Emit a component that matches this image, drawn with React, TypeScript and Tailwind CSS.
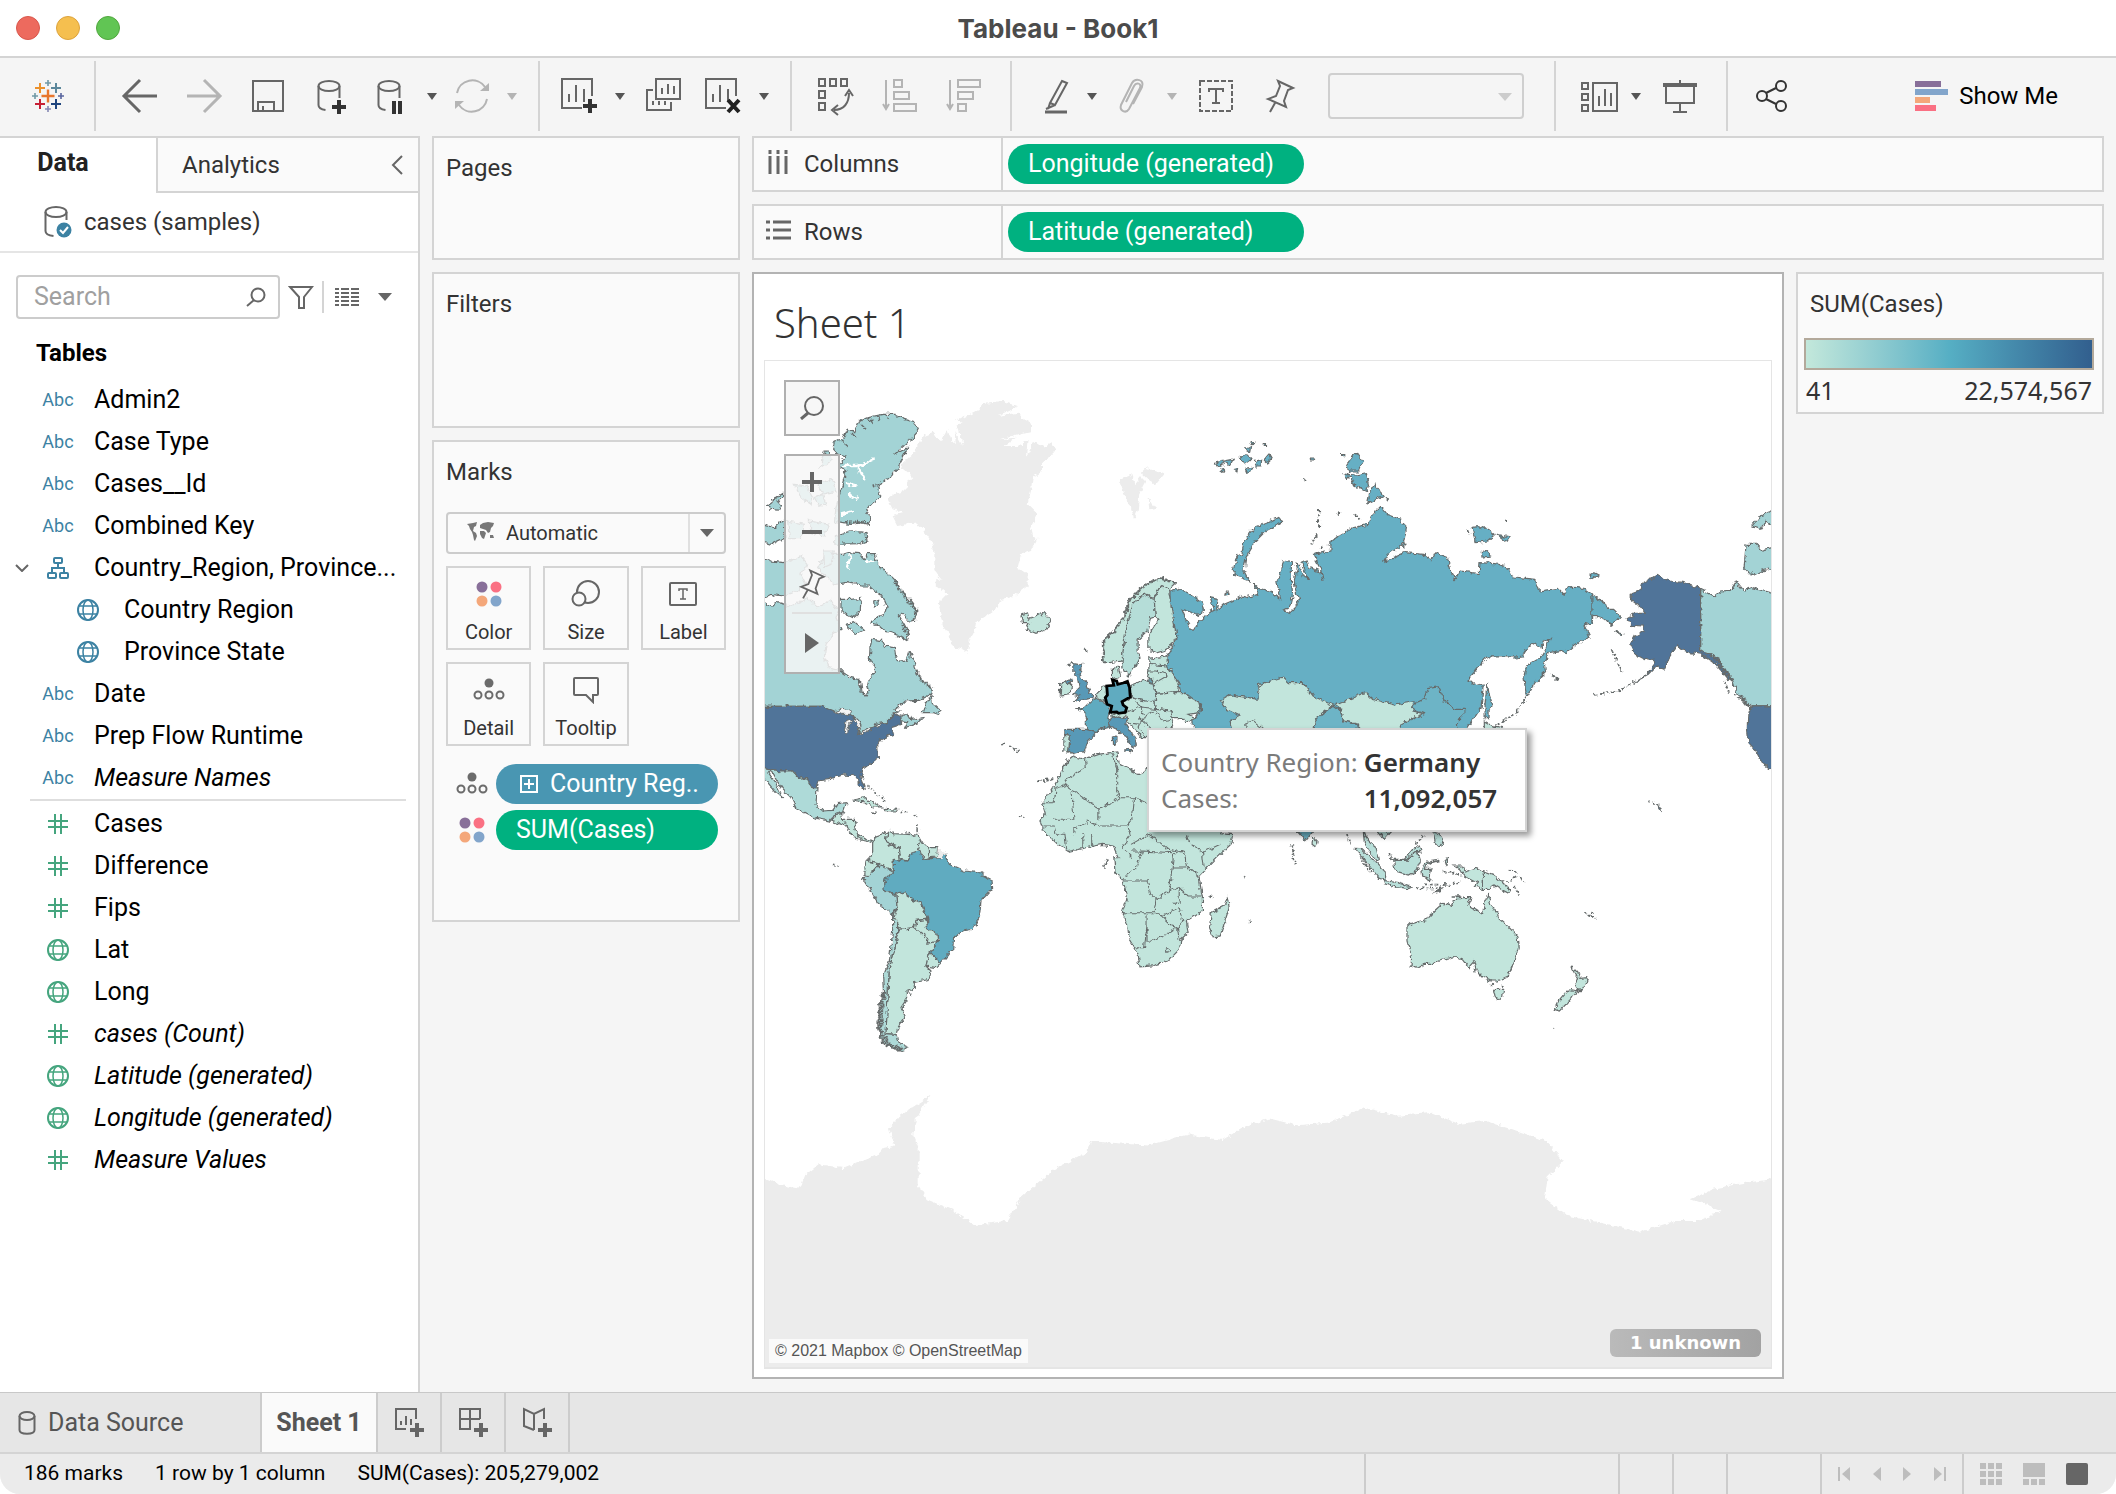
import { type ReactNode } from "react";
import { clsx } from "clsx";

// ─── Data ────────────────────────────────────────────────────────────────────

type FieldKind = "abc" | "hash" | "globe" | "tree";

interface Field {
  name: string;
  kind: FieldKind;
  italic?: boolean;
  child?: boolean;
}

const DIMENSIONS: Field[] = [
  { name: "Admin2", kind: "abc" },
  { name: "Case Type", kind: "abc" },
  { name: "Cases__Id", kind: "abc" },
  { name: "Combined Key", kind: "abc" },
  { name: "Country_Region, Province...", kind: "tree" },
  { name: "Country Region", kind: "globe", child: true },
  { name: "Province State", kind: "globe", child: true },
  { name: "Date", kind: "abc" },
  { name: "Prep Flow Runtime", kind: "abc" },
  { name: "Measure Names", kind: "abc", italic: true },
];

const MEASURES: Field[] = [
  { name: "Cases", kind: "hash" },
  { name: "Difference", kind: "hash" },
  { name: "Fips", kind: "hash" },
  { name: "Lat", kind: "globe" },
  { name: "Long", kind: "globe" },
  { name: "cases (Count)", kind: "hash", italic: true },
  { name: "Latitude (generated)", kind: "globe", italic: true },
  { name: "Longitude (generated)", kind: "globe", italic: true },
  { name: "Measure Values", kind: "hash", italic: true },
];

// ─── Icons ───────────────────────────────────────────────────────────────────

function Icon({
  size = 40,
  className,
  children,
}: {
  size?: number;
  className?: string;
  children: ReactNode;
}) {
  return (
    <svg
      width={size}
      height={size}
      viewBox={`0 0 ${size} ${size}`}
      fill="none"
      stroke="currentColor"
      strokeWidth="2"
      className={clsx("shrink-0", className)}
      aria-hidden="true"
    >
      {children}
    </svg>
  );
}

function Caret({ className }: { className?: string }) {
  return (
    <svg
      width="14"
      height="8"
      viewBox="0 0 14 8"
      className={clsx("shrink-0", className)}
      aria-hidden="true"
    >
      <path d="M0 0h14L7 8z" fill="currentColor" />
    </svg>
  );
}

function SmallCaret({ className }: { className?: string }) {
  return (
    <svg
      width="10"
      height="7"
      viewBox="0 0 10 7"
      className={clsx("shrink-0", className)}
      aria-hidden="true"
    >
      <path d="M0 0h10L5 7z" fill="currentColor" />
    </svg>
  );
}

function LogoIcon() {
  return (
    <Icon>
      <path d="M20 13.5v13M13.5 20h13" stroke="#e8762d" strokeWidth="2.4" />
      <path d="M12 7v10M7 12h10" stroke="#eb912c" />
      <path d="M28 7v10M23 12h10" stroke="#5b879b" />
      <path d="M12 23v10M7 28h10" stroke="#c72035" />
      <path d="M28 23v10M23 28h10" stroke="#1f457e" />
      <path d="M20 4v6M17 7h6M7 17v6M4 20h6" stroke="#7099a6" strokeWidth="1.6" />
      <path d="M33 17v6M30 20h6" stroke="#59659e" strokeWidth="1.6" />
      <path d="M20 30v6M17 33h6" stroke="#8689b5" strokeWidth="1.6" />
    </Icon>
  );
}

function DatabaseIcon({ children }: { children: ReactNode }) {
  return (
    <Icon>
      <ellipse cx="17" cy="10" rx="10.5" ry="5" />
      <path d="M6.5 10v19c0 3 3 4.500 7 5M27.500 10v12" />
      {children}
    </Icon>
  );
}

function SheetIcon({ children }: { children: ReactNode }) {
  return (
    <Icon>
      <path d="M22 32H2V3h30v17M9 26v-8M16 26V9M24 26V13" />
      {children}
    </Icon>
  );
}

function PinIcon({ size = 40 }: { size?: number }) {
  return (
    <svg
      width={size}
      height={size}
      viewBox="0 0 40 40"
      fill="none"
      stroke="currentColor"
      strokeWidth="2"
      aria-hidden="true"
    >
      <path d="M18 5 33 12 28 14 24 25 26 31 8 23 16 20 20 10zM15 27 10 36" />
    </svg>
  );
}

function GlobeIcon() {
  return (
    <Icon size={24}>
      <circle cx="12" cy="12" r="10" />
      <ellipse cx="12" cy="12" rx="5" ry="10" strokeWidth="1.500" />
      <path d="M3 8h18M3 16h18" strokeWidth="1.500" />
    </Icon>
  );
}

function HashIcon() {
  return (
    <Icon size={24}>
      <path d="M9 2v20M15 2v20M2 9h20M2 15h20" />
    </Icon>
  );
}

function TreeIcon() {
  return (
    <Icon size={24}>
      <rect x="8" y="2" width="8" height="5" rx="1" />
      <rect x="2" y="17" width="8" height="5" rx="1" />
      <rect x="14" y="17" width="8" height="5" rx="1" />
      <path d="M12 7v5M6 17v-5h12v5" />
    </Icon>
  );
}

function ColorDots() {
  return (
    <svg width="26" height="26" viewBox="0 0 26 26" aria-hidden="true">
      <circle cx="6" cy="6" r="5.500" fill="#886f99" />
      <circle cx="20" cy="6" r="5.500" fill="#fa7083" />
      <circle cx="6" cy="20" r="5.500" fill="#f4a77a" />
      <circle cx="20" cy="20" r="5.500" fill="#82a5cb" />
    </svg>
  );
}

function DetailDots() {
  return (
    <svg
      width="32"
      height="24"
      viewBox="0 0 32 24"
      fill="none"
      stroke="#6b6b6b"
      strokeWidth="2"
      aria-hidden="true"
    >
      <circle cx="16" cy="5" r="4.500" fill="#6b6b6b" stroke="none" />
      <circle cx="5" cy="17" r="3.500" />
      <circle cx="16" cy="17" r="3.500" />
      <circle cx="27" cy="17" r="3.500" />
    </svg>
  );
}

// ─── Title bar and toolbar ───────────────────────────────────────────────────

function TitleBar() {
  return (
    <header className="relative flex h-[58px] shrink-0 items-center justify-center border-b-2 border-[#d4d4d4] bg-white">
      <div className="absolute left-4 flex gap-4">
        <button aria-label="Close" className="size-6 rounded-full border border-[#d9574c] bg-[#ed6a5e]" />
        <button aria-label="Minimize" className="size-6 rounded-full border border-[#dda33c] bg-[#f5bf4f]" />
        <button aria-label="Zoom" className="size-6 rounded-full border border-[#51a73e] bg-[#61c554]" />
      </div>
      <h1 className="font-[Inter,sans-serif] text-[26px] font-bold text-[#4b4b4b]">
        Tableau - Book1
      </h1>
    </header>
  );
}

const TOOL_WIDTHS = {
  sm: "w-10",
  md: "w-12",
  lg: "w-14",
  xl: "w-16",
};

function Tool({
  label,
  disabled,
  size = "xl",
  children,
}: {
  label: string;
  disabled?: boolean;
  size?: keyof typeof TOOL_WIDTHS;
  children: ReactNode;
}) {
  return (
    <button
      aria-label={label}
      disabled={disabled}
      className={clsx(
        "flex shrink-0 items-center justify-center",
        TOOL_WIDTHS[size],
        disabled ? "text-[#b4b4b4]" : "text-[#666666]"
      )}
    >
      {children}
    </button>
  );
}

function Menu({ label, disabled }: { label: string; disabled?: boolean }) {
  return (
    <button
      aria-label={label}
      disabled={disabled}
      className={clsx(
        "flex h-10 w-6 shrink-0 items-center justify-center",
        disabled ? "text-[#b4b4b4]" : "text-[#555555]"
      )}
    >
      <SmallCaret />
    </button>
  );
}

function ToolGroup({ className, children }: { className?: string; children: ReactNode }) {
  return (
    <div
      className={clsx(
        "flex h-[70px] shrink-0 items-center border-r-2 border-[#d4d4d4]",
        className
      )}
    >
      {children}
    </div>
  );
}

function Toolbar() {
  return (
    <div className="flex h-[78px] shrink-0 items-center bg-[#f5f5f5] pb-0.5">
      <ToolGroup className="w-24 pl-7">
        <Tool label="Start page" size="sm">
          <LogoIcon />
        </Tool>
      </ToolGroup>

      <ToolGroup className="pr-3.5 pl-3">
        <Tool label="Undo">
          <Icon>
            <path d="M37 20H4M20 4 4 20l16 16" strokeWidth="3" />
          </Icon>
        </Tool>
        <Tool label="Redo" disabled>
          <Icon>
            <path d="M3 20h33M20 4l16 16-16 16" strokeWidth="3" />
          </Icon>
        </Tool>
        <Tool label="Save">
          <Icon>
            <path d="M5 5h30v30H5zM10 35V26h16v9M15 30v5" />
          </Icon>
        </Tool>
        <Tool label="New data source">
          <DatabaseIcon>
            <path d="M27 24v14M20 31h14" stroke="#333333" strokeWidth="4" />
          </DatabaseIcon>
        </Tool>
        <Tool label="Pause auto updates" size="lg">
          <DatabaseIcon>
            <path d="M22 25v13M28 25v13" stroke="#333333" strokeWidth="4" />
          </DatabaseIcon>
        </Tool>
        <Menu label="Auto update options" />
        <Tool label="Run update" size="lg" disabled>
          <Icon>
            <path d="M5 17A15.500 15.500 0 0 1 33 11M35 23A15.500 15.500 0 0 1 7 29" />
            <path d="M28 15h9V7zM12 25H3v8z" fill="currentColor" stroke="none" />
          </Icon>
        </Tool>
        <Menu label="Run update options" disabled />
      </ToolGroup>

      <ToolGroup className="pr-3.5 pl-3">
        <Tool label="New worksheet" size="lg">
          <SheetIcon>
            <path d="M30 23v14M23 30h14" stroke="#333333" strokeWidth="4" />
          </SheetIcon>
        </Tool>
        <Menu label="New worksheet options" />
        <Tool label="Duplicate">
          <Icon>
            <path d="M12 3h24v20H12zM18 18v-6M24 18V8M30 18v-8M9 14H3v20h24v-8M9 29v-4M15 29v-4M21 29v-4" />
          </Icon>
        </Tool>
        <Tool label="Clear sheet" size="lg">
          <SheetIcon>
            <path d="m24 24 11 12M35 24 24 36" stroke="#222222" strokeWidth="4" />
          </SheetIcon>
        </Tool>
        <Menu label="Clear options" />
      </ToolGroup>

      <ToolGroup className="pr-3.5 pl-3">
        <Tool label="Swap rows and columns">
          <Icon>
            <path d="M3 3h6v7H3zM14 3h6v7h-6zM25 3h6v7h-6zM3 15h6v7H3zM3 27h6v7H3zM18 34c10 0 15-7 15-17M29 20l4-6 4 6M22 29l-6 5 6 5" />
          </Icon>
        </Tool>
        <Tool label="Sort ascending" disabled>
          <Icon>
            <path d="M6 4v28M3 28l3 5 3-5M14 4h8v7h-8zM14 16h15v7H14zM14 28h22v7H14z" />
          </Icon>
        </Tool>
        <Tool label="Sort descending" disabled>
          <Icon>
            <path d="M6 4v28M3 28l3 5 3-5M14 4h22v7H14zM14 16h15v7H14zM14 28h8v7h-8z" />
          </Icon>
        </Tool>
      </ToolGroup>

      <ToolGroup className="pr-[30px] pl-5">
        <Tool label="Highlight" size="md">
          <Icon>
            <path d="m26 5 5 2-12 22-5-2zM14 27l-2 6M10 33l9-4" />
            <path d="M9 36h22" strokeWidth="3" />
          </Icon>
        </Tool>
        <Menu label="Highlight options" />
        <Tool label="Group members" size="lg" disabled>
          <Icon>
            <path d="m14 26 8-16c2-4 8-3 6 2L17 33c-3 5-10 2-8-4l11-22c3-5 13-4 10 4L21 28" />
          </Icon>
        </Tool>
        <Menu label="Group options" disabled />
        <Tool label="Show mark labels">
          <Icon>
            <rect x="4" y="5" width="32" height="30" strokeDasharray="5 2" />
            <path d="M13 16v-3h14v3M20 13v14M16 27h8" />
          </Icon>
        </Tool>
        <Tool label="Fix axes">
          <PinIcon />
        </Tool>
        <div className="relative ml-4 text-[#cccccc]">
          <select
            aria-label="Fit"
            disabled
            className="h-[46px] w-[196px] appearance-none rounded border-2 border-[#cfcfcf] bg-[#f5f5f5]"
          />
          <Caret className="pointer-events-none absolute top-5 right-3" />
        </div>
      </ToolGroup>

      <ToolGroup className="pr-3.5 pl-5">
        <Tool label="Show or hide cards" size="md">
          <Icon>
            <path d="M2 7h6v6H2zM2 18h6v6H2zM2 29h6v6H2zM13 7h24v28H13zM19 30V20M25 30V13M31 30V17" />
          </Icon>
        </Tool>
        <Menu label="Card options" />
        <Tool label="Presentation mode">
          <Icon>
            <path d="M20 4v4M20 28v8M13 36h14M6 10v17h28V10" />
            <path d="M3 9h34" strokeWidth="4" />
          </Icon>
        </Tool>
      </ToolGroup>

      <div className="flex flex-1 items-center justify-between pr-[58px] pl-6">
        <Tool label="Share" size="sm">
          <Icon className="text-[#333333]">
            <circle cx="10" cy="20" r="5" />
            <circle cx="29" cy="10" r="5" />
            <circle cx="29" cy="30" r="5" />
            <path d="m14 17 10-5M14 23l10 5" />
          </Icon>
        </Tool>
        <button className="flex items-center gap-2.5 text-2xl text-black">
          <svg width="34" height="30" viewBox="0 0 34 30" aria-hidden="true">
            <path fill="#886f99" d="M0 0h26v6H0z" />
            <path fill="#82a5cb" d="M0 8h33v6H0z" />
            <path fill="#f4a77a" d="M0 16h15v6H0z" />
            <path fill="#fa7083" d="M0 24h21v6H0z" />
          </svg>
          Show Me
        </button>
      </div>
    </div>
  );
}

// ─── Data pane ───────────────────────────────────────────────────────────────

function FieldRow({ field, measure }: { field: Field; measure?: boolean }) {
  return (
    <li className={clsx("flex h-[42px] items-center", field.child ? "pl-[30px]" : "pl-0")}>
      <span className="flex w-10 shrink-0 justify-center pl-1 text-[#666666]">
        {field.kind === "tree" && (
          <svg width="14" height="8" viewBox="0 0 14 8" fill="none" aria-hidden="true">
            <path d="m1 1 6 6 6-6" stroke="currentColor" strokeWidth="2" />
          </svg>
        )}
      </span>
      <span
        className={clsx(
          "flex w-9 shrink-0 justify-center text-lg",
          measure ? "text-[#45a57e]" : "text-[#3c82a3]"
        )}
      >
        {field.kind === "abc" && "Abc"}
        {field.kind === "tree" && <TreeIcon />}
        {field.kind === "globe" && <GlobeIcon />}
        {field.kind === "hash" && <HashIcon />}
      </span>
      <span
        className={clsx(
          "ml-[18px] text-[25px] whitespace-nowrap text-black",
          field.italic && "italic"
        )}
      >
        {field.name}
      </span>
    </li>
  );
}

function DataPane() {
  return (
    <aside className="w-[420px] shrink-0 border-t-2 border-r-2 border-[#d4d4d4] bg-white">
      <div className="flex h-[55px]" role="tablist">
        <button
          role="tab"
          aria-selected="true"
          className="w-[156px] pr-[30px] pb-1.5 text-[25px] font-bold text-[#222222]"
        >
          Data
        </button>
        <div className="flex flex-1 items-center justify-between border-b-2 border-l-2 border-[#d4d4d4] bg-[#fafafa] pr-3.5 pl-6">
          <button role="tab" aria-selected="false" className="text-2xl text-[#333333]">
            Analytics
          </button>
          <button aria-label="Collapse pane" className="text-[#666666]">
            <svg width="14" height="20" viewBox="0 0 14 20" fill="none">
              <path d="M12 1 3 10l9 9" stroke="currentColor" strokeWidth="2" />
            </svg>
          </button>
        </div>
      </div>

      <div className="flex h-[60px] items-center gap-3 border-b-2 border-[#e5e5e5] pl-10 text-2xl text-[#333333]">
        <svg width="32" height="34" viewBox="0 0 32 34" fill="none" stroke="#666666" strokeWidth="2" aria-hidden="true">
          <ellipse cx="16" cy="7" rx="10.500" ry="5" />
          <path d="M5.500 7v19c0 3 3 4.500 8 5M26.500 7v8" />
          <circle cx="24" cy="25" r="7.500" fill="#3c82a3" stroke="none" />
          <path d="m20 25 3 3 5-6" stroke="#ffffff" />
        </svg>
        cases (samples)
      </div>

      <div className="flex items-center gap-2 pt-[22px] pl-4">
        <label className="flex h-[44px] w-[264px] items-center rounded border-2 border-[#cccccc] pr-3 pl-4">
          <input
            type="text"
            aria-label="Search fields"
            placeholder="Search"
            className="w-full min-w-0 text-[25px] text-[#333333] outline-none placeholder:text-[#a0a0a0]"
          />
          <Icon size={20} className="text-[#666666]">
            <circle cx="12" cy="8" r="6.500" />
            <path d="m8 13-7 6" />
          </Icon>
        </label>
        <button aria-label="Filter fields" className="text-[#666666]">
          <Icon size={26}>
            <path d="M2 3h22l-8 10v11h-5V13z" />
          </Icon>
        </button>
        <div className="h-8 border-l-2 border-[#d4d4d4]" />
        <button aria-label="View options" className="flex items-center gap-[18px] pl-0.5 text-[#666666]">
          <svg width="26" height="18" viewBox="0 0 26 18" stroke="currentColor" strokeWidth="2" aria-hidden="true">
            <path d="M1 1h4M1 5h4M1 9h4M1 13h4M1 17h4M7 1h8M7 5h8M7 9h8M7 13h8M7 17h8M17 1h8M17 5h8M17 9h8M17 13h8M17 17h8" />
          </svg>
          <Caret />
        </button>
      </div>

      <h2 className="flex h-[60px] items-end pb-[10px] pl-9 text-2xl font-bold text-black">
        Tables
      </h2>
      <ul>
        {DIMENSIONS.map((f) => (
          <FieldRow key={f.name} field={f} />
        ))}
      </ul>
      <hr className="mr-3 mb-0.5 ml-[30px] border-t-2 border-[#dedede]" />
      <ul>
        {MEASURES.map((f) => (
          <FieldRow key={f.name} field={f} measure />
        ))}
      </ul>
    </aside>
  );
}

// ─── Cards ───────────────────────────────────────────────────────────────────

function MarkButton({ label, children }: { label: string; children: ReactNode }) {
  return (
    <button className="flex h-[84px] flex-col items-center justify-end border-2 border-[#d4d4d4] bg-[#fafafa] pb-1 text-xl leading-6 text-[#333333]">
      <span className="flex flex-1 items-center justify-center text-[#666666]">{children}</span>
      {label}
    </button>
  );
}

function CardsColumn() {
  return (
    <div className="flex w-[308px] shrink-0 flex-col gap-3 text-2xl text-[#333333]">
      <section className="h-[124px] border-2 border-[#d4d4d4] bg-[#fafafa] px-3 py-3.5">
        Pages
      </section>
      <section className="h-[156px] border-2 border-[#d4d4d4] bg-[#fafafa] px-3 py-3.5">
        Filters
      </section>
      <section className="h-[482px] border-2 border-[#d4d4d4] bg-[#fafafa] px-3 py-3.5">
        <h2>Marks</h2>
        <div className="relative mt-6">
          <select
            aria-label="Mark type"
            className="h-[42px] w-full appearance-none rounded border-2 border-[#cccccc] bg-[#fafafa] pl-[58px] text-xl text-[#333333]"
          >
            <option>Automatic</option>
          </select>
          <svg
            width="28"
            height="20"
            viewBox="0 0 28 20"
            fill="#777777"
            className="pointer-events-none absolute top-2.5 left-[21px]"
            aria-hidden="true"
          >
            <path d="M0 2l6-1 4-1-1 4-2 1-1 4 3 2 1 3-2 5-1-1-1-5-1-3-2-3-1-3zM13 3l3-2 5-1 6 1-1 3-2 2-1 4-2 1-2-3-3-1-3-1zM13 9l4 0 2 2-2 6-2-1-2-4zM23 13l3 0 1 3-4 0z" />
          </svg>
          <span className="pointer-events-none absolute inset-y-0.5 right-0.5 flex w-9 items-center justify-center border-l-2 border-[#e0e0e0] text-[#666666]">
            <Caret />
          </span>
        </div>
        <div className="mt-3 grid grid-cols-3 gap-3">
          <MarkButton label="Color">
            <ColorDots />
          </MarkButton>
          <MarkButton label="Size">
            <Icon size={30}>
              <circle cx="17" cy="13" r="11" />
              <circle cx="8" cy="20" r="6.500" fill="#fafafa" />
            </Icon>
          </MarkButton>
          <MarkButton label="Label">
            <svg width="28" height="24" viewBox="0 0 28 24" fill="none" stroke="currentColor" strokeWidth="2" aria-hidden="true">
              <rect x="1" y="1" width="26" height="22" rx="1" />
              <path d="M10 9V7h8v2M14 7v10M11 17h6" strokeWidth="1.500" />
            </svg>
          </MarkButton>
          <MarkButton label="Detail">
            <DetailDots />
          </MarkButton>
          <MarkButton label="Tooltip">
            <Icon size={28}>
              <path d="M3 2h22q1 0 1 1v15q0 1-1 1h-4v7l-7-7H3q-1 0-1-1V3q0-1 1-1z" />
            </Icon>
          </MarkButton>
        </div>
        <div className="mt-[18px] flex flex-col gap-1.5 pr-2 pl-2.5">
          <div className="flex items-center gap-2">
            <DetailDots />
            <button className="flex h-10 flex-1 items-center gap-3 rounded-full bg-[#4996b2] pl-6 text-[25px] text-white">
              <Icon size={18}>
                <path d="M1 1h16v16H1zM9 4v10M4 9h10" />
              </Icon>
              Country Reg..
            </button>
          </div>
          <div className="flex items-center gap-2">
            <span className="flex w-8 justify-center">
              <ColorDots />
            </span>
            <button className="h-10 flex-1 rounded-full bg-[#00b180] pl-5 text-left text-[25px] text-white">
              SUM(Cases)
            </button>
          </div>
        </div>
      </section>
    </div>
  );
}

function Shelf({ label, pill, icon }: { label: string; pill: string; icon: ReactNode }) {
  return (
    <div className="flex h-14 border-2 border-[#d4d4d4] bg-[#fafafa]">
      <div className="flex w-[249px] shrink-0 items-center gap-3 border-r-2 border-[#d4d4d4] pl-3 text-2xl text-[#333333]">
        <span className="pb-1 text-[#666666]">{icon}</span>
        {label}
      </div>
      <button className="my-1.5 ml-[5px] h-10 w-[296px] rounded-full bg-[#00b180] pl-5 text-left text-[25px] text-white">
        {pill}
      </button>
    </div>
  );
}

// ─── Map ─────────────────────────────────────────────────────────────────────

const LOW = "#c2e5dc";
const CANADA = "#a3d3d5";
const MID = "#aedad8";
const USA = "#507499";
const RUSSIA = "#66afc4";
const BRAZIL = "#60abc0";
const CHINA = "#6db4c6";
const SPAIN = "#5899b7";
const EMPTY = "#ececec";

interface Shape {
  fill: string;
  d: string;
}

// Northern Atlantic
const NORTH_ATLANTIC: Shape[] = [
  { fill: CANADA, d: "M30 1066H215L250 1085 300 1090 320 1105 330 1120 325 1140 318 1150 345 1135 370 1128 375 1118 405 1115 428 1090 445 1080 430 1078 460 1050 505 1048 540 1030 547 1015 530 1000 510 985 497 965 490 935 475 905 468 930 455 935 435 920 430 890 400 885 390 868 362 865 357 890 355 925 370 945 370 965 355 985 350 1005 355 1020 345 1035 330 1020 325 985 300 980 270 960 235 950 220 920 225 880 245 850 270 835 255 800 262 780 240 745 200 770 170 740 120 765 80 755 60 765 30 750z" },
  { fill: CANADA, d: "M30 620 60 630 100 635 150 615 170 640 150 670 165 700 140 720 100 735 60 730 30 745z" },
  { fill: CANADA, d: "M275 610 300 603 325 605 340 625 350 608 370 608 375 630 390 655 410 665 430 685 445 710 455 725 475 745 490 765 498 785 490 810 475 815 455 785 445 795 460 820 475 850 470 870 445 855 420 845 400 840 385 825 360 820 365 805 400 790 408 765 395 735 370 720 355 705 330 705 320 700 285 695 250 700 200 650 220 610z" },
  { fill: CANADA, d: "M270 745 300 745 330 742 328 780 305 800 285 790 270 775zM285 820 310 812 340 838 315 850zM368 750 380 745 382 765 370 768z" },
  { fill: CANADA, d: "M517 1085 525 1060 540 1035 545 1058 570 1080 565 1092 545 1085zM450 1090 470 1088 480 1105 515 1100 500 1115 462 1132 470 1115 450 1112z" },
  { fill: CANADA, d: "M245 295 250 270 275 265 290 235 310 245 325 210 350 200 370 195 395 190 430 190 460 205 490 215 502 240 480 265 430 310 472 290 450 330 425 375 395 390 380 410 390 440 360 460 345 485 360 500 355 520 330 515 300 520 250 515 255 470 265 430 275 400 285 360 262 345 285 315 255 305z" },
  { fill: CANADA, d: "M250 555 300 540 345 545 348 570 320 578 252 580zM50 460 75 440 95 428 95 442 78 450 92 465 85 478 60 475zM30 520 70 530 100 505 102 560 60 580 30 570z" },
  { fill: CANADA, d: "M222 300 235 300 240 330 210 350zM130 400 165 405 185 440 180 460 150 440zM200 400 240 385 255 420 215 430zM110 510 160 520 150 560 115 560zM175 510 235 520 220 555 180 545zM190 440 215 430 225 460 205 465zM215 600 250 600 240 640 218 650z" },
  { fill: LOW, d: "M810 795 830 788 835 805 860 795 880 785 900 810 885 835 855 847 825 835 835 815 815 815z" },
];

const UNMAPPED: string[] = [
  "M410 445 430 430 460 420 475 390 485 380 475 370 450 350 455 335 485 310 500 285 520 255 545 245 555 260 570 270 590 235 600 265 615 280 610 240 635 285 620 220 650 215 660 235 615 205 650 195 680 180 700 155 755 150 800 165 775 180 740 195 800 185 815 200 840 215 840 240 800 250 745 265 795 260 760 285 800 285 830 270 825 320 850 270 880 290 900 275 915 295 895 320 870 335 870 360 845 380 840 420 830 460 860 490 840 530 850 570 860 560 840 600 810 610 800 650 830 670 830 705 790 735 745 750 730 780 700 800 675 815 670 845 655 870 650 905 635 895 610 890 590 850 575 820 565 770 570 740 590 730 550 700 560 680 575 690 550 660 550 600 540 570 520 540 490 515 440 525 425 495 460 485 425 475z",
  "M1105 385 1145 370 1150 400 1170 375 1185 390 1165 430 1160 480 1150 505 1140 470 1120 430zM1170 365 1185 350 1240 370 1215 400 1190 385zM1190 440 1215 470 1195 475z",
];

// The Americas below 49°N
const AMERICAS: Shape[] = [
  { fill: USA, d: "M30 16H215L250 30 300 40 325 70 320 100 345 85 370 78 405 65 428 42 445 38 452 70 420 80 425 100 390 115 380 130 382 170 335 205 330 225 342 255 338 270 325 255 315 225 280 222 250 228 235 235 200 240 195 262 180 255 165 230 145 232 125 210 85 210 30 198z" },
  { fill: MID, d: "M30 198 85 210 125 210 145 232 165 230 180 255 198 262 195 310 215 330 245 328 260 308 287 305 278 330 270 335 245 345 240 360 195 352 135 322 120 290 95 265 75 235 60 208 50 212 70 240 95 290 75 275 30 220z" },
  { fill: LOW, d: "M240 360 255 340 272 338 275 355 310 355 315 385 320 400 345 415 365 418 362 428 345 420 315 415 295 390 285 375zM305 297 340 290 370 305 390 318 370 318 340 303zM400 322 440 325 435 333 402 332zM358 333 374 333 366 337z" },
  { fill: LOW, d: "M365 425 375 405 405 395 412 390 405 425 420 435 445 440 448 475 430 480 430 515 385 490 350 478 365 460z" },
  { fill: LOW, d: "M412 390 430 398 500 402 510 420 500 445 510 455 475 462 470 480 448 475 445 440 405 425z" },
  { fill: LOW, d: "M505 420 530 435 535 470 520 475 512 455 500 445zM530 440H560L558 468 535 470z" },
  { fill: LOW, d: "M345 480 385 488 350 528 338 522z" },
  { fill: CANADA, d: "M335 530 350 528 385 490 430 515 425 520 400 545 410 570 435 580 438 620 425 642 380 605 360 570z" },
  { fill: BRAZIL, d: "M430 475 470 480 475 462 508 450 515 475 570 470 583 455 595 490 640 510 680 515 720 535 722 565 690 600 685 650 665 685 635 690 608 712 605 745 570 785 535 755 565 715 560 700 530 680 530 650 510 605 470 590 460 572 430 580 400 570 398 545 410 525 430 515z" },
  { fill: LOW, d: "M435 580 465 572 470 590 508 605 530 655 495 658 488 680 445 685 430 640 438 620z" },
  { fill: LOW, d: "M495 660 525 655 530 680 558 700 560 720 550 727 525 725 525 710 490 683z" },
  { fill: LOW, d: "M445 685 488 680 530 710 525 727 560 722 535 755 525 795 540 810 535 835 490 845 490 865 468 870 470 890 450 920 462 945 445 970 435 1000 400 998 410 900 415 800 430 750z" },
  { fill: LOW, d: "M535 755 570 785 555 800 525 795z" },
  { fill: MID, d: "M425 642 440 660 440 690 430 750 415 800 410 900 405 998 435 1000 440 1025 475 1040 450 1050 400 1030 385 1000 385 930 398 880 395 830 415 780 425 690z" },
];

// Europe, Africa and the Indian Ocean
const EUROPE_AFRICA: Shape[] = [
  { fill: LOW, d: "M118 615 150 625 190 610 240 603 248 640 300 668 325 655 480 680 530 845 565 848 560 880 520 920 470 975 480 1040 480 1080 435 1110 440 1145 420 1165 415 1195 385 1230 340 1245 305 1248 300 1210 275 1165 270 1120 255 1085 270 1040 258 990 235 960 232 920 245 920 230 885 200 880 175 885 105 902 75 880 35 840 25 810 40 790 30 755 60 715 85 670 100 630z" },
  { fill: LOW, d: "M550 1040 555 1070 530 1155 510 1158 500 1130 505 1085 540 1065zM790 860 803 875 797 888 787 880z" },
  { fill: CHINA, d: "M740 830H795L768 868z" },
  { fill: LOW, d: "M205 335 200 270 230 240 260 200 270 160 290 130 320 100 360 80 405 95 385 115 365 105 345 140 320 130 300 140 285 165 280 210 265 245 260 290 255 330 220 335z" },
  { fill: "#b5ddd8", d: "M255 330 260 280 265 245 275 200 285 160 305 138 320 130 345 145 348 195 335 200 325 240 300 265 300 300 305 320 290 350 275 375 260 360z" },
  { fill: LOW, d: "M345 140 365 105 385 115 390 150 400 215 408 255 385 295 345 308 330 290 330 250 345 225 358 205 348 195z" },
  { fill: LOW, d: "M228 385V355L245 348 250 375z" },
  { fill: LOW, d: "M330 360V322L380 315 383 345 400 375 413 400 410 425 350 430 345 400 325 385z" },
  { fill: "#b5ddd8", d: "M278 405 318 388 345 400 350 430 348 455 320 450 278 440z" },
  { fill: LOW, d: "M350 430 410 425 430 425 475 460 472 485 440 490 460 500 435 515 425 500 395 500 390 480 345 475z" },
  { fill: LOW, d: "M222 483 265 485 255 455 280 440 320 450 348 455 345 475 390 480 400 515 385 560 310 560 290 530 270 515 265 495 225 500z" },
  { fill: LOW, d: "M180 438 205 405 212 410 210 455z" },
  { fill: BRAZIL, d: "M130 470 148 470 180 440 210 460 222 465 215 500 220 525 190 535 185 545 155 535 155 495 145 480z" },
  { fill: SPAIN, d: "M92 535 155 535 185 545 160 570 150 600 120 610 105 600 110 555 92 553z" },
  { fill: LOW, d: "M92 553 110 555 105 603 92 600z" },
  { fill: SPAIN, d: "M218 510 245 495 270 505 265 520 290 560 295 580 285 590 270 560 240 535 220 525zM228 558 238 555V582L228 580zM258 597 282 595 278 605z" },
  { fill: SPAIN, d: "M120 335 145 340 135 370 150 385 165 420 175 440 120 452 135 435 120 430 135 410 130 380 120 370zM98 388 110 384 114 394 104 397z" },
  { fill: LOW, d: "M83 400 98 390 104 397 114 398 110 428 82 432z" },
  { fill: RUSSIA, d: "M320 388 340 385 342 395z" },
];

const AFRICA_BORDERS =
  "M150 625 152 650 95 690 93 705 70 712 68 735 60 755H30M95 700 190 775 250 740 240 725V650L225 610M115 720 120 805H65M190 775V808M250 740H290L325 758M290 740 285 790 270 825M120 850V835L160 810 190 825 270 825 280 850 255 890 285 920M170 850V885M145 850V890M35 825H65L70 850 95 850 100 895M280 880 330 850 345 860 385 895 435 905M280 900H310L400 905M310 900 295 950 265 975M258 990H325L335 1030 350 1045 345 1085H255M400 905 395 950 390 1000 385 1020 350 1045M430 905 435 945 470 975M395 948H435M385 1020 415 1010 440 1035H478M415 1010V1060H395M345 1085 365 1095 415 1070 425 1110 410 1130 395 1125 365 1095M325 1090V1175M325 1120 318 1190H295M325 1175 370 1155 410 1130 415 1165M480 905 485 950M435 850 440 870 480 905 530 880M383 1190 392 1198 383 1207 375 1198z";

const EUROPE_BORDERS =
  "M330 360H350L385 372M330 340 380 345M340 400 385 372M265 485 300 470 345 475M290 450 310 470M310 470 320 500 300 520M320 500 345 475 370 510 390 505M270 515 300 520 320 560M300 500 345 540 385 530M222 500 240 485";

// Northern Asia and the Pacific
const ASIA_PACIFIC: Shape[] = [
  { fill: RUSSIA, d: "M48 630 70 622 100 640 130 665 135 690 120 703 78 685 88 715 95 740 110 745 120 725 135 710 150 690 160 685 150 650 170 655 165 690 185 670 215 655 230 645 245 650 270 640 265 620 300 630 328 655 318 600 330 570 335 540 355 545 355 600 358 640 350 680 335 690 350 697 365 680 375 650 368 640 362 600 370 560 366 545 378 560 385 585 398 590 385 560 382 545 395 540 400 560 430 575 435 600 428 560 410 520 455 510 455 480 480 460 510 440 550 430 560 400 580 378 595 400 630 415 647 435 640 480 625 500 600 520 590 540 640 515 690 520 710 537 718 515 750 530 758 570 770 595 780 570 830 578 832 545 870 548 900 558 915 588 970 595 980 630 1030 622 1045 640 1055 618 1095 622 1115 640 1150 668 1155 685 1170 685 1187 705 1165 735 1150 715 1120 702 1118 725 1095 732 1110 770 1085 780 1050 815 1040 808 1005 815 995 850 998 875 975 900 950 948 943 890 950 855 985 830 1000 800 1010 772 995 780 985 800 970 785 955 795 940 825 920 828 850 828 820 870 802 895 815 910 830 905 840 915 835 980 790 1060H115L105 1020 125 985 120 965 75 935 70 905 40 860V830L50 810 65 765 55 720 48 680z" },
  { fill: RUSSIA, d: "M850 903 855 940 865 975 855 985V1013H845V970zM325 407 330 425 290 450 265 480 250 510 240 530 235 570 248 600 215 585 208 570 215 530 230 520 235 480 260 440 295 425zM258 605 270 618 265 622zM185 635 192 630 195 640 188 642z" },
  { fill: RUSSIA, d: "M518 213 535 240 525 270 500 270 495 250zM505 285 545 275 550 310 545 332 515 315zM566 310 588 345 570 355 548 368 555 330zM487 283 495 275 503 285 497 293zM482 218h8v6h-8zM403 231h8v6h-8z" },
  { fill: RUSSIA, d: "M162 248 180 238 185 250 172 256zM185 240 208 235 200 252zM175 265 188 262 184 273zM212 265 222 262 220 272zM226 230 240 218 255 235 240 248 232 242zM240 205 252 197 250 212zM252 182 262 182 258 190zM262 242 280 235 278 255 266 255zM286 240 300 220 306 232 292 246zM238 262 258 258 252 272 242 274zM284 188h8v5h-8z" },
  { fill: RUSSIA, d: "M812 440 825 437 835 445 845 437 870 460 850 480 820 485zM875 460 908 468 900 482zM835 515 845 508 858 525 838 528zM1107 588 1120 575 1132 583 1115 595zM1172 750 1195 758 1190 764zM632 492 642 490 642 500z" },
  { fill: LOW, d: "M175 960 200 942 245 950 270 955 275 910 335 888 350 905 385 905 410 945 460 973 430 1000 410 1060H205L200 1020 225 1005 190 985z" },
  { fill: CHINA, d: "M460 973 480 990 488 1020 520 1030 525 1060H410L415 1022 430 1000zM632 1060V1030L665 1010 688 998 660 985 670 965 690 955 700 920 725 915 745 960 770 985 795 985 775 1030 780 1060z" },
  { fill: LOW, d: "M468 970 500 955 540 935 560 955 615 972 665 962 660 990 690 998 665 1010 630 1030 632 1060H525V1030L488 1020 480 990z" },
  { fill: LOW, d: "M843 1020 865 1035 890 1040 870 1060H843z" },
  { fill: USA, d: "M1212 640 1235 630 1240 610 1280 583 1310 600 1350 605 1390 625V810L1420 825 1460 870 1470 900 1450 880 1425 845 1395 820 1365 815 1340 805 1330 795 1310 830 1300 865 1280 855 1260 880 1225 902 1255 880 1275 850 1270 835 1245 832 1225 820 1213 790 1225 765 1248 750 1245 735 1215 733 1202 713 1225 697 1250 697 1240 680 1212 655z" },
  { fill: CANADA, d: "M1390 625 1425 645 1440 630 1465 628 1480 600 1500 630 1520 620 1580 640V975H1520L1500 960 1480 930 1470 895 1430 830 1410 820 1390 812zM1505 490 1530 490 1545 510 1580 500V560L1545 570 1520 585 1500 560zM1520 435 1545 400 1580 385V440L1555 420 1540 445z" },
  { fill: USA, d: "M1520 975H1580V1175L1545 1145 1530 1110 1512 1085 1508 1040 1510 990z" },
];

// Southeast Asia and Oceania
const OCEANIA: Shape[] = [
  { fill: "#b8dfd9", d: "M163 202 180 203 220 240 255 275 252 298 235 292 205 255zM248 298 290 305 330 318 320 323 280 316 250 308zM278 235 310 235 335 205 355 195 360 212 350 215 358 240 345 270 325 282 290 272 280 255zM370 245 415 238 375 250 370 262 390 262 385 285 392 298 365 285 362 262z" },
  { fill: "#b8dfd9", d: "M186 140 200 180 225 200 235 235 228 240 205 210 190 185zM230 150 270 150 250 175zM395 150 415 155 425 185 415 198 403 185zM395 338 430 320 415 332zM432 235 440 232 438 255z" },
  { fill: LOW, d: "M460 255 485 255 492 270 520 262 548 270 575 280 600 300 630 330 625 338 600 325 580 312 565 325 548 325 520 318 530 305 490 285 475 265z" },
  { fill: LOW, d: "M318 440 330 428 380 415 400 390 425 367 450 375 465 350 510 350 500 372 545 400 552 360 560 340 570 370 582 385 590 410 625 440 648 465 652 500 640 540 622 585 590 600 570 600 545 590 525 570 520 540 502 560 485 537 462 527 415 537 400 550 370 550 350 562 330 555 332 530 318 480z" },
  { fill: LOW, d: "M578 625 608 625 605 645 592 657 583 650zM810 555 830 575 838 592 860 590 855 605 840 628 832 632 822 608 832 595zM805 625 828 630 800 665 775 690 760 685 770 665z" },
  { fill: USA, d: "M1072 78 1083 82 1078 88z" },
];

const SPECKS =
  "M601 300 630 300 645 285M625 265 650 280M660 290 668 305M640 315 655 345M345 322H430M440 315 480 300M425 275 460 275 480 285M140 160 150 190M175 225 210 275M345 190 370 160M455 345 485 345M850 395 865 405 875 390M860 400 885 415M1040 60 1046 60M1056 64 1072 74M755 744 758 742M265 215 272 240M372 310 440 312M570 610 575 615M604 612 607 618";

function Shapes({ shapes }: { shapes: Shape[] }) {
  return (
    <>
      {shapes.map((s) => (
        <path key={s.d} d={s.d} fill={s.fill} vectorEffect="non-scaling-stroke" />
      ))}
    </>
  );
}

function WorldMap() {
  return (
    <svg
      viewBox="764 360 1006 1006"
      className="block w-full"
      role="img"
      aria-label="World map of cases by country"
      stroke="#666b6b"
      strokeWidth="1.2"
      fill="none"
    >
      <defs>
        <filter id="coast" x="0" y="0" width="100%" height="100%" colorInterpolationFilters="sRGB">
          <feTurbulence type="fractalNoise" baseFrequency="0.2" numOctaves="2" seed="4" />
          <feDisplacementMap in="SourceGraphic" scale="6" xChannelSelector="R" yChannelSelector="G" />
        </filter>
      </defs>

      <g filter="url(#coast)">
        <rect x="754" y="350" width="1026" height="1026" fill="#ffffff" stroke="none" />
        <g fill={EMPTY} stroke="none">
          <path
            transform="scale(1.3495)"
            d="M557 874 568 873 580 878 592 880 596 870 606 862 625 865 650 855 654 850 662 848 658 835 666 826 678 818 689 811 678 828 676 840 680 850 680 878 686 888 705 896 722 907 745 904 755 888 780 866 805 853 808 845 850 848 880 840 905 844 920 835 940 828 960 833 985 831 1010 820 1035 826 1060 824 1080 832 1100 830 1120 836 1145 845 1158 860 1146 872 1144 888 1160 900 1180 904 1215 912 1240 904 1258 904 1275 896 1252 888 1270 880 1290 876 1320 872V1025H557z"
          />
          <g transform="translate(750 350) scale(0.3333)">
            {UNMAPPED.map((d) => (
              <path key={d} d={d} />
            ))}
          </g>
        </g>

        <g transform="translate(750 350) scale(0.3333)">
          <Shapes shapes={NORTH_ATLANTIC} />
          <g stroke="#ffffff" strokeWidth="7">
            <path d="M270 345 320 345 368 325M320 345 342 388M285 395 320 405M270 490 310 480M290 430 320 445" />
            <path d="M300 610 290 650M345 630 370 632" />
          </g>
          <g strokeDasharray="5 4" strokeWidth="9">
            <path d="M430 690 460 735 495 775 490 805M455 820 472 855M285 512 355 515M365 405 385 400M495 960 515 990 545 1015" />
            <path d="M350 200 365 215M380 195 385 210M405 190 410 208M330 220 345 235M270 270 290 285M300 240 312 260" strokeWidth="4" strokeDasharray="none" />
          </g>
        </g>

        <g transform="translate(750 700) scale(0.3333)">
          <Shapes shapes={AMERICAS} />
          <path d="M560 440 582 455 575 468 558 468z" fill={EMPTY} stroke="none" />
          <path
            d="M248 35 275 22 300 28 300 40 275 40zM280 95 285 62 305 55 292 75 290 100zM305 55 325 60 332 85 318 72zM318 100 345 85 370 80 345 96z"
            fill="#f4f4f4"
            strokeWidth="3"
          />
          <path
            d="M350 255 375 275 402 300M245 490 265 495M750 125 758 130M775 135 803 152M860 240 900 238M803 345 820 355M488 340 500 350M500 370 503 400M460 392 480 396M448 334 466 334"
            strokeDasharray="7 6"
            strokeWidth="5"
          />
          <path d="M398 875 390 920 386 980 400 1020 450 1048" strokeDasharray="6 2" strokeWidth="15" />
          <path d="M275 355 290 375M320 400 325 415M430 435 445 440M470 872 480 885" strokeWidth="3" />
        </g>

        <g transform="translate(1150 380) scale(0.3954 0.3333)">
          <Shapes shapes={ASIA_PACIFIC} />
          <path d="M1115 640V725M1390 625V812M240 1050V1025L260 1020 285 1045" strokeWidth="3" />
          <path
            d="M1225 902 1180 932 1120 942M865 1040 920 1000 948 950M1015 880 1030 900M1165 805 1190 870M1450 900 1460 930 1500 960 1520 990M425 385V440M420 460 405 490M430 500 455 490M470 400 478 395M515 400 530 415M895 415 900 420M800 445 805 460M385 295 392 300M595 350 603 362"
            strokeDasharray="9 6"
            strokeWidth="5"
          />
          <path d="M1428 830 1450 870 1465 895M1490 945 1520 985" strokeDasharray="7 3" strokeWidth="12" />
        </g>

        <g transform="translate(1030 550) scale(0.3571 0.3333)">
          <Shapes shapes={EUROPE_AFRICA} />
          <path d={AFRICA_BORDERS} strokeWidth="3" />
          <path d={EUROPE_BORDERS} strokeWidth="3" />
          <path
            d="M202 330 202 270 235 238 262 195 275 150 320 100 360 82 405 95M105 345 120 330M150 300 155 292M20 690 60 685M730 880 738 940M595 975 600 980M500 1035 510 1042M610 1112 615 1112M215 925 205 950M1460 375 1475 390"
            strokeDasharray="7 4"
            strokeWidth="7"
          />
        </g>

        <g transform="translate(1300 780) scale(0.3333)">
          <Shapes shapes={OCEANIA} />
          <path d="M547 270V325M280 238 315 238 345 212 360 212" strokeWidth="4" />
          <path d={SPECKS} strokeDasharray="9 5" strokeWidth="5" />
        </g>
      </g>

      <path
        transform="translate(1030 550) scale(0.3571 0.3333)"
        d="M228 386 240 390 243 400 258 396 270 391 276 410 278 438 255 452 258 462 268 470 264 484 245 487 240 483 222 484 226 465 213 460 208 440 214 432 212 405 232 403z"
        fill={BRAZIL}
        stroke="#000000"
        strokeWidth="8"
      />
    </svg>
  );
}

function MapView() {
  return (
    <div className="relative border border-b-2 border-[#e5e5e5]">
      <WorldMap />

      <button
        aria-label="Search map"
        className="absolute top-[19px] left-[19px] flex size-14 items-center justify-center border-2 border-[#b0b0b0] bg-[#f7f7f7] text-[#666666]"
      >
        <Icon size={24}>
          <circle cx="14" cy="10" r="9" />
          <path d="m8 17-7 6" strokeWidth="3" />
        </Icon>
      </button>
      <div className="absolute top-[93px] left-[19px] flex h-[220px] w-14 flex-col items-center border-2 border-[#b0b0b0] bg-[#f7f7f7]/85 text-[#666666]">
        <button aria-label="Zoom in" className="flex h-[52px] w-full items-center justify-center">
          <Icon size={20}>
            <path d="M10 0v20M0 10h20" strokeWidth="4" />
          </Icon>
        </button>
        <button aria-label="Zoom out" className="flex h-12 w-full items-center justify-center">
          <Icon size={20}>
            <path d="M0 10h20" strokeWidth="4" />
          </Icon>
        </button>
        <button aria-label="Reset map" className="flex h-14 w-full items-center justify-center">
          <PinIcon size={36} />
        </button>
        <div className="w-10 border-t-2 border-[#e0e0e0]" />
        <button aria-label="Map tools" className="flex w-full flex-1 items-center justify-center">
          <svg width="14" height="20" viewBox="0 0 14 20" aria-hidden="true">
            <path d="M0 0 14 10 0 20z" fill="currentColor" />
          </svg>
        </button>
      </div>

      <div
        role="tooltip"
        className="absolute top-[367px] left-[382px] grid grid-cols-[auto_auto] gap-x-1.5 border-2 border-[#d4d4d4] bg-white py-3.5 pr-7 pl-3 font-['Noto_Sans',sans-serif] text-[26px] leading-9 shadow-[4px_4px_6px_rgba(0,0,0,0.4)]"
      >
        <span className="text-[#7b7b7b]">Country Region:</span>
        <span className="font-semibold text-[#333333]">Germany</span>
        <span className="text-[#7b7b7b]">Cases:</span>
        <span className="font-semibold text-[#333333]">11,092,057</span>
      </div>

      <div className="absolute bottom-1 left-1 bg-[#fafafa] px-1.5 font-['Liberation_Sans',Arial,sans-serif] text-base text-[#555555]">
        © 2021 Mapbox © OpenStreetMap
      </div>
      <button className="absolute right-2.5 bottom-2.5 h-7 rounded-md bg-gradient-to-r from-[#bababa] to-[#a2a2a2] px-5 font-['DejaVu_Sans',Verdana,sans-serif] text-lg font-bold text-white">
        1 unknown
      </button>
    </div>
  );
}

function Legend() {
  return (
    <section className="h-[142px] w-[308px] shrink-0 border-2 border-[#d4d4d4] bg-[#fafafa] pt-3.5 text-[#333333]">
      <h2 className="px-3 text-2xl">SUM(Cases)</h2>
      <div className="mt-[18px] mr-2 ml-1.5 h-8 border-2 border-[#b3a99b] bg-gradient-to-r from-[#c3e8db] via-[#56afc4] to-[#325f8e]" />
      <div className="flex justify-between pr-2.5 pl-2 font-['Noto_Sans',sans-serif] text-[25px] leading-10">
        <span>41</span>
        <span>22,574,567</span>
      </div>
    </section>
  );
}

// ─── Bottom bars ─────────────────────────────────────────────────────────────

function NewTab({ label, children }: { label: string; children: ReactNode }) {
  return (
    <button
      aria-label={label}
      className="flex w-16 items-center justify-center border-r-2 border-[#cccccc] text-[#666666]"
    >
      <Icon size={32}>
        {children}
        <path d="M24 16v14M17 23h14" strokeWidth="4" />
      </Icon>
    </button>
  );
}

function SheetTabs() {
  return (
    <nav className="flex h-[62px] shrink-0 border-t border-b-2 border-t-[#c8c8c8] border-b-[#d4d4d4] bg-[#e6e6e6] text-[25px] text-[#555555]">
      <button className="flex w-[262px] items-center gap-2.5 border-r-2 border-[#cccccc] pl-4">
        <svg width="22" height="24" viewBox="0 0 22 24" fill="none" stroke="#666666" strokeWidth="2" aria-hidden="true">
          <ellipse cx="11" cy="5" rx="7.500" ry="4" />
          <path d="M3.500 5v14c0 5 15 5 15 0V5" />
        </svg>
        Data Source
      </button>
      <button className="w-[116px] border-r-2 border-[#cccccc] bg-[#fafafa] font-bold">
        Sheet 1
      </button>
      <NewTab label="New worksheet">
        <path d="M13 22H3V2h20v10M8 18v-4M13 18V9M18 18v-6" />
      </NewTab>
      <NewTab label="New dashboard">
        <path d="M14 22H3V2h20v10M13 2v20M3 12h20" />
      </NewTab>
      <NewTab label="New story">
        <path d="M13 23 3 19V2l10 5 10-5v10M13 7v16" />
      </NewTab>
    </nav>
  );
}

function StatusBar() {
  return (
    <footer className="flex h-10 shrink-0 bg-[#ebebeb] text-[21px] text-black">
      <div className="flex flex-1 items-center gap-8 pl-6">
        <span>186 marks</span>
        <span>1 row by 1 column</span>
        <span>SUM(Cases): 205,279,002</span>
      </div>
      <div className="w-[254px] border-l-2 border-[#cccccc]" />
      <div className="w-[54px] border-l-2 border-[#cccccc]" />
      <div className="w-[54px] border-l-2 border-[#cccccc]" />
      <div className="w-[94px] border-l-2 border-[#cccccc]" />
      <div className="flex w-[142px] items-center justify-between border-l-2 border-[#cccccc] px-4 text-[#bdbdbd]">
        <button aria-label="First sheet">
          <svg width="12" height="14" viewBox="0 0 12 14" fill="currentColor">
            <path d="M0 0h2v14H0zM12 0v14L4 7z" />
          </svg>
        </button>
        <button aria-label="Previous sheet">
          <svg width="8" height="14" viewBox="0 0 8 14" fill="currentColor">
            <path d="M8 0v14L0 7z" />
          </svg>
        </button>
        <button aria-label="Next sheet">
          <svg width="8" height="14" viewBox="0 0 8 14" fill="currentColor">
            <path d="M0 0v14l8-7z" />
          </svg>
        </button>
        <button aria-label="Last sheet">
          <svg width="12" height="14" viewBox="0 0 12 14" fill="currentColor">
            <path d="M10 0h2v14h-2zM0 0v14l8-7z" />
          </svg>
        </button>
      </div>
      <div className="flex w-[154px] items-center justify-between border-l-2 border-[#cccccc] pr-7 pl-4 text-[#bdbdbd]">
        <button aria-label="Show sheet sorter">
          <svg width="22" height="22" viewBox="0 0 22 22" fill="currentColor">
            <path d="M0 0h6v6H0zM8 0h6v6H8zM16 0h6v6h-6zM0 8h6v6H0zM8 8h6v6H8zM16 8h6v6h-6zM0 16h6v6H0zM8 16h6v6H8zM16 16h6v6h-6z" />
          </svg>
        </button>
        <button aria-label="Show filmstrip">
          <svg width="22" height="22" viewBox="0 0 22 22" fill="currentColor">
            <path d="M0 0h22v14H0zM0 16h6v6H0zM8 16h6v6H8zM16 16h6v6h-6z" />
          </svg>
        </button>
        <button aria-label="Show tabs" className="size-[22px] rounded-xs bg-[#666666]" />
      </div>
    </footer>
  );
}

// ─── App ─────────────────────────────────────────────────────────────────────

export default function App() {
  return (
    <div className="flex min-h-screen flex-col overflow-hidden rounded-b-[20px] bg-[#f5f5f5] font-[Roboto,'Liberation_Sans',sans-serif]">
      <TitleBar />
      <Toolbar />
      <main className="flex flex-1">
        <DataPane />
        <div className="flex min-w-0 flex-1 gap-3 px-3 pb-3">
          <CardsColumn />
          <div className="flex min-w-0 flex-1 flex-col gap-3">
            <Shelf
              label="Columns"
              pill="Longitude (generated)"
              icon={
                <Icon size={26}>
                  <path d="M4 1v4M12 1v4M20 1v4M4 7v18M12 7v18M20 7v18" strokeWidth="3" />
                </Icon>
              }
            />
            <Shelf
              label="Rows"
              pill="Latitude (generated)"
              icon={
                <Icon size={26}>
                  <path d="M0 5h4M0 13h4M0 21h4M7 5h18M7 13h18M7 21h18" strokeWidth="3" />
                </Icon>
              }
            />
            <div className="flex items-start gap-3">
              <section className="min-w-0 flex-1 border-2 border-[#b3b3b3] bg-white px-2.5 pb-2">
                <h2 className="flex h-[86px] items-center pt-3 pl-2.5 font-['Noto_Sans',sans-serif] text-[40px] font-light text-[#333333]">
                  Sheet 1
                </h2>
                <MapView />
              </section>
              <Legend />
            </div>
          </div>
        </div>
      </main>
      <SheetTabs />
      <StatusBar />
    </div>
  );
}
